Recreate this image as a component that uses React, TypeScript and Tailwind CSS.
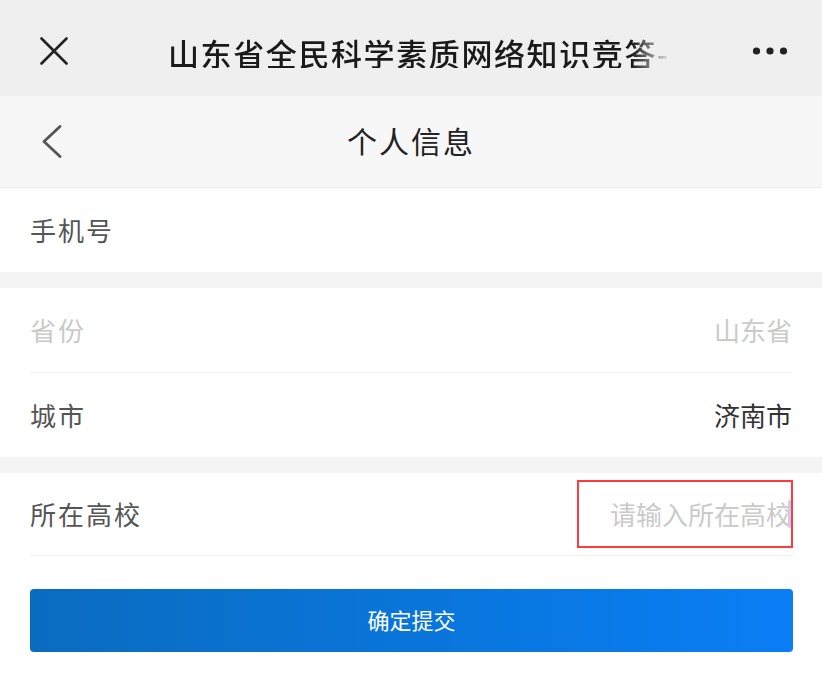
import React from "react";

const CloseIcon = () => (
  <svg width="28" height="28" viewBox="0 0 28 28" fill="none">
    <path d="M1.5 1.5 L26.5 26.5 M26.5 1.5 L1.5 26.5" stroke="#222" strokeWidth="2.6" strokeLinecap="round" />
  </svg>
);

const BackIcon = () => (
  <svg width="20" height="34" viewBox="0 0 20 34" fill="none">
    <path d="M18 1.5 L2 16.5 L18 31.5" stroke="#555" strokeWidth="2.8" strokeLinecap="round" strokeLinejoin="round" />
  </svg>
);

const MoreIcon = () => (
  <svg width="36" height="10" viewBox="0 0 36 10">
    <circle cx="4.5" cy="5" r="3.6" fill="#222" />
    <circle cx="18" cy="5" r="3.6" fill="#222" />
    <circle cx="31.5" cy="5" r="3.6" fill="#222" />
  </svg>
);

const Row = ({ label, value, dim, valueDark }: { label: string; value?: string; dim?: boolean; valueDark?: boolean }) => (
  <div className="h-[84px] px-[30px] flex items-center justify-between">
    <span className={`text-[26px] tracking-[2px] ${dim ? "text-[#cacaca]" : "text-[#555]"}`}>{label}</span>
    {value && (
      <span className={`text-[26px] ${valueDark ? "text-[#333]" : "text-[#cacaca]"}`}>{value}</span>
    )}
  </div>
);

export default function App() {
  return (
    <div className="w-[822px] min-h-[673px] bg-white font-['Noto_Sans_CJK_SC',sans-serif] leading-none">
      {/* 小程序外壳标题栏 */}
      <div className="h-[96px] bg-[#efefef] grid grid-cols-[168px_504px_1fr] items-center pt-[8px]">
        <div className="pl-[40px] flex items-center -mt-[2px]">
          <CloseIcon />
        </div>
        <div className="whitespace-nowrap [mask-image:linear-gradient(to_right,black_92%,transparent_100%)]">
          <span className="text-[31px] font-medium text-[#1a1a1a] tracking-[1.6px]">山东省全民科学素质网络知识竞答-</span>
        </div>
        <div className="flex justify-end pr-[34px] -mt-[2px]">
          <MoreIcon />
        </div>
      </div>

      {/* 页面导航 */}
      <div className="h-[92px] bg-[#f7f7f7] border-b border-[#ececec] grid grid-cols-[1fr_auto_1fr] items-center">
        <div className="pl-[42px] flex items-center">
          <BackIcon />
        </div>
        <span className="text-[30px] text-[#222] tracking-[2px] -mt-[3px]">个人信息</span>
        <div />
      </div>

      <Row label="手机号" />
      <div className="h-[16px] bg-[#f4f4f4]" />

      <Row label="省份" value="山东省" dim />
      <div className="mx-[30px] border-b border-[#f0f0f0]" />
      <Row label="城市" value="济南市" valueDark />
      <div className="h-[16px] bg-[#f4f4f4]" />

      <div className="relative h-[82px] px-[30px] flex items-center justify-between">
        <span className="text-[26px] tracking-[2px] text-[#555]">所在高校</span>
        <div className="flex items-center">
          <span className="text-[26px] text-[#cacaca]">请输入所在高校</span>
          <span className="w-[4px] h-[28px] bg-[#c8ccf2] rounded-[2px] -ml-[4px]" />
        </div>
        <div className="absolute right-[29px] top-[7px] w-[216px] h-[68px] border-[2.5px] border-[#ff3b3b]" />
      </div>
      <div className="mx-[30px] border-b border-[#f0f0f0]" />

      <div className="px-[30px] pr-[29px] pt-[33px]">
        <button className="w-full h-[63px] rounded-[4px] bg-gradient-to-r from-[#0a6cbf] to-[#0a7ef6] text-white text-[22px] flex items-center justify-center pb-[3px]">
          确定提交
        </button>
      </div>
    </div>
  );
}
